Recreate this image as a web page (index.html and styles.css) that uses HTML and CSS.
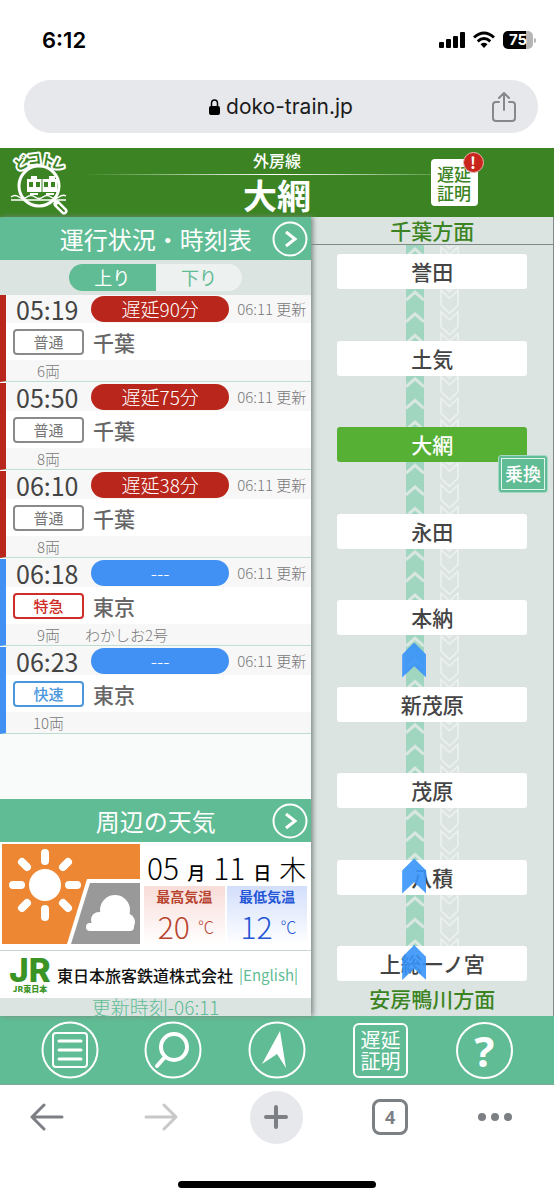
FILE: index.html
```html
<!DOCTYPE html>
<html lang="ja">
<head>
    <meta charset="UTF-8">
    <meta name="viewport" content="width=device-width, initial-scale=1.0">
    <title>どこトレ 大網</title>
    <link rel="stylesheet" href="styles.css">
</head>
<body>
    <div class="status-bar">
        <span class="clock">6:12</span>
        <div class="status-icons">
            <svg width="26" height="18" viewBox="0 0 26 18">
                <rect x="0" y="11" width="5" height="6" rx="1"/>
                <rect x="7" y="8" width="5" height="9" rx="1"/>
                <rect x="14" y="5" width="5" height="12" rx="1"/>
                <rect x="21" y="1" width="5" height="16" rx="1"/>
            </svg>
            <svg width="22" height="18" viewBox="0 0 22 18" fill="none" stroke="#000" stroke-width="3">
                <path d="M1 6.500Q11 -2.500 21 6.500"/>
                <path d="M4.700 10.300Q11 4.700 17.300 10.300"/>
                <path d="M11 17L7.500 13.200Q11 10.500 14.500 13.200Z" fill="#000" stroke="none"/>
            </svg>
            <div class="battery"><span>75</span></div>
            <i class="battery-tip"></i>
        </div>
    </div>

    <div class="url-bar">
        <div class="url">
            <svg width="11" height="16" viewBox="0 0 11 16">
                <rect x="0" y="7" width="11" height="9" rx="2"/>
                <path d="M2.500 8V4.500a3 3.500 0 0 1 6 0V8" fill="none" stroke="#000" stroke-width="1.500"/>
            </svg>
            <span>doko-train.jp</span>
        </div>
        <button class="share" aria-label="Share">
            <svg width="24" height="30" viewBox="0 0 24 30" fill="none" stroke="#85888d" stroke-width="2" stroke-linecap="round" stroke-linejoin="round">
                <path d="M7 10H4q-3 0-3 3v13q0 3 3 3h16q3 0 3-3V13q0-3-3-3h-3M12 18V1M7 6l5-5 5 5"/>
            </svg>
        </button>
    </div>

    <header class="header">
        <a class="logo" href="#" aria-label="どこトレ">
            <svg width="60" height="66" viewBox="0 0 60 66">
                <path d="M1 48q4-3 8 0t8 0 8 0 8 0 8 0 8 0 7-1M1 51h55" fill="none" stroke="#fff" stroke-width="1.500"/>
                <circle cx="29" cy="37" r="20" fill="none" stroke="#fff" stroke-width="3"/>
                <path d="M43 51l4 3" stroke="#fff" stroke-width="3"/>
                <path d="M47 55l7 7" stroke="#fff" stroke-width="7" stroke-linecap="round"/>
                <path d="M48 56l6 6" stroke="#3c8423" stroke-width="2" stroke-linecap="round"/>
                <path d="M17 30h30v13H17zM21 27h6v3h-6zM39 27h6v3h-6z" fill="#fff"/>
                <path d="M19 33h4v5h-4zM26 33h4v5h-4zM34 33h4v5h-4zM41 33h4v5h-4z" fill="#3c8423"/>
                <path d="M32 30v13" stroke="#3c8423"/>
                <path d="M20 45h8M36 45h8" stroke="#fff" stroke-width="2"/>
                <g class="logo-text">
                    <text transform="translate(7 22) rotate(-26)">ど</text>
                    <text transform="translate(18 16) rotate(-8)">コ</text>
                    <text transform="translate(30 15) rotate(10)">ト</text>
                    <text transform="translate(40 17) rotate(26)">レ</text>
                </g>
            </svg>
        </a>
        <div class="header-title">
            <p class="line-name">外房線</p>
            <h1>大網</h1>
        </div>
        <button class="certificate">遅延<br>証明<span class="alert">!</span></button>
    </header>

    <main class="main">
        <div class="left">
            <section>
                <div class="heading">
                    <h2>運行状況・時刻表</h2>
                    <button class="more" aria-label="運行状況・時刻表">
                        <svg width="36" height="36" viewBox="0 0 36 36" fill="none" stroke="#fff" stroke-width="2">
                            <circle cx="18" cy="18" r="16.500"/>
                            <path d="M14 11l9 7-9 7" stroke-width="3"/>
                        </svg>
                    </button>
                </div>
                <div class="direction-switch">
                    <button class="active">上り</button><button>下り</button>
                </div>
            </section>

            <ul class="trains">
                <li class="train delayed">
                    <div class="train-top"><time>05:19</time><span class="state">遅延90分</span><span class="updated">06:11 更新</span></div>
                    <div class="train-mid"><span class="type">普通</span><span class="dest">千葉</span></div>
                    <div class="train-bottom"><span class="cars">6両</span></div>
                </li>
                <li class="train delayed">
                    <div class="train-top"><time>05:50</time><span class="state">遅延75分</span><span class="updated">06:11 更新</span></div>
                    <div class="train-mid"><span class="type">普通</span><span class="dest">千葉</span></div>
                    <div class="train-bottom"><span class="cars">8両</span></div>
                </li>
                <li class="train delayed">
                    <div class="train-top"><time>06:10</time><span class="state">遅延38分</span><span class="updated">06:11 更新</span></div>
                    <div class="train-mid"><span class="type">普通</span><span class="dest">千葉</span></div>
                    <div class="train-bottom"><span class="cars">8両</span></div>
                </li>
                <li class="train">
                    <div class="train-top"><time>06:18</time><span class="state">---</span><span class="updated">06:11 更新</span></div>
                    <div class="train-mid"><span class="type express">特急</span><span class="dest">東京</span></div>
                    <div class="train-bottom"><span class="cars">9両</span><span>わかしお2号</span></div>
                </li>
                <li class="train">
                    <div class="train-top"><time>06:23</time><span class="state">---</span><span class="updated">06:11 更新</span></div>
                    <div class="train-mid"><span class="type rapid">快速</span><span class="dest">東京</span></div>
                    <div class="train-bottom"><span class="cars">10両</span></div>
                </li>
            </ul>

            <section>
                <div class="heading">
                    <h2>周辺の天気</h2>
                    <button class="more" aria-label="周辺の天気">
                        <svg width="36" height="36" viewBox="0 0 36 36" fill="none" stroke="#fff" stroke-width="2">
                            <circle cx="18" cy="18" r="16.500"/>
                            <path d="M14 11l9 7-9 7" stroke-width="3"/>
                        </svg>
                    </button>
                </div>
                <div class="weather">
                    <svg width="138" height="100" viewBox="0 0 138 100">
                        <rect width="138" height="100" fill="#ed8733"/>
                        <path d="M65 100L85 35h53v65z" fill="#fff"/>
                        <path d="M69 100L88 39h50v61z" fill="#999"/>
                        <circle cx="43" cy="41" r="16" fill="#fff"/>
                        <g stroke="#fff" stroke-width="8" stroke-linecap="round">
                            <path d="M43 9v8M43 65v8M11 41h8M67 41h8M20 18l5 5M61 59l5 5M20 64l5-5M61 23l5-5"/>
                        </g>
                        <g fill="#fff">
                            <circle cx="113" cy="66" r="15"/>
                            <circle cx="97" cy="76" r="8"/>
                            <circle cx="124" cy="78" r="9"/>
                            <rect x="84" y="79" width="48" height="8" rx="4"/>
                            <rect x="96" y="72" width="28" height="14"/>
                        </g>
                    </svg>
                    <div class="forecast">
                        <p class="date">05<small>月</small>11<small>日</small><b>木</b></p>
                        <div class="temps">
                            <div class="temp high"><h3>最高気温</h3><p>20<small>℃</small></p></div>
                            <div class="temp low"><h3>最低気温</h3><p>12<small>℃</small></p></div>
                        </div>
                    </div>
                </div>
                <div class="company">
                    <div class="jr"><strong>JR</strong><span>JR東日本</span></div>
                    <span class="company-name">東日本旅客鉄道株式会社</span>
                    <a href="#">|English|</a>
                </div>
                <p class="update-time">更新時刻-06:11</p>
            </section>
        </div>

        <div class="right">
            <p class="bound bound-up">千葉方面</p>
            <div class="route">
                <svg class="tracks" width="54" height="100%">
                    <defs>
                        <pattern id="track" width="54" height="21.630" patternUnits="userSpaceOnUse">
                            <rect y="-1" x="1" width="18" height="24" fill="#a0d5bf"/>
                            <path d="M1 12l9-8 9 8" fill="none" stroke="#dae7e2" stroke-width="3"/>
                            <path d="M36 2l8.500 8 8.500-8v15l-8.500 8-8.500-8zM36 -4.630l8.500 8 8.500-8" fill="none" stroke="#eff4f3" stroke-width="1.300"/>
                        </pattern>
                    </defs>
                    <rect width="54" height="100%" fill="url(#track)"/>
                </svg>
                <ul class="stations">
                    <li>誉田</li>
                    <li>土気</li>
                    <li class="current">大網<a class="transfer" href="#">乗換</a></li>
                    <li>永田</li>
                    <li>本納</li>
                    <li>新茂原<i class="marker between"></i></li>
                    <li>茂原</li>
                    <li>八積<i class="marker"></i></li>
                    <li>上総一ノ宮<i class="marker"></i></li>
                </ul>
            </div>
            <p class="bound">安房鴨川方面</p>
        </div>
    </main>

    <nav class="nav">
        <button aria-label="メニュー">
            <svg width="58" height="58" viewBox="0 0 58 58" fill="none" stroke="#fff" stroke-width="2">
                <circle cx="29" cy="29" r="27.500"/>
                <rect x="12" y="12" width="34" height="34" rx="3"/>
                <path d="M18 20h22M18 29h22M18 38h22" stroke-width="3" stroke-linecap="round"/>
            </svg>
        </button>
        <button aria-label="検索">
            <svg width="58" height="58" viewBox="0 0 58 58" fill="none" stroke="#fff" stroke-width="2">
                <circle cx="29" cy="29" r="27.500"/>
                <circle cx="30" cy="26" r="13" stroke-width="4"/>
                <path d="M20 37l-7 8" stroke-width="4" stroke-linecap="round"/>
            </svg>
        </button>
        <button aria-label="現在地">
            <svg width="58" height="58" viewBox="0 0 58 58" fill="none" stroke="#fff" stroke-width="2">
                <circle cx="29" cy="29" r="27.500"/>
                <path d="M32 10l6 37-9-14-15 10z" fill="#fff" stroke="none"/>
            </svg>
        </button>
        <button class="nav-certificate">遅延<br>証明</button>
        <button class="help">?</button>
    </nav>

    <div class="toolbar">
        <button class="back" aria-label="Back">
            <svg width="34" height="28" viewBox="0 0 34 28" fill="none" stroke="#7c8084" stroke-width="3" stroke-linecap="round" stroke-linejoin="round">
                <path d="M32 14H2M14 2L2 14l12 12"/>
            </svg>
        </button>
        <button class="forward" aria-label="Forward">
            <svg width="34" height="28" viewBox="0 0 34 28" fill="none" stroke="#c8c8c8" stroke-width="3" stroke-linecap="round" stroke-linejoin="round">
                <path d="M2 14h30M20 2l12 12-12 12"/>
            </svg>
        </button>
        <button class="new-tab" aria-label="New tab">
            <svg width="24" height="24" viewBox="0 0 24 24" stroke="#7c8084" stroke-width="4" stroke-linecap="round">
                <path d="M12 2v20M2 12h20"/>
            </svg>
        </button>
        <button class="tabs">4</button>
        <button aria-label="More">
            <svg width="34" height="8" viewBox="0 0 34 8" fill="#7c8084">
                <circle cx="4" cy="4" r="4"/>
                <circle cx="17" cy="4" r="4"/>
                <circle cx="30" cy="4" r="4"/>
            </svg>
        </button>
    </div>
    <div class="home-indicator"></div>
</body>
</html>
```
FILE: styles.css
```css
:root {
    --green: #3c8423;
    --teal: #60bc94;
    --panel: #dce4e2;
    --strip: #f7f7f7;
    --red: #b9261b;
    --blue: #4191f5;
    --gray: #7c8084;
}

* {
    box-sizing: border-box;
}

body {
    margin: 0;
    background-color: #fff;
    font-family: "Noto Sans CJK JP", sans-serif;
    color: #444;
}

h1, h2, h3, p, ul {
    margin: 0;
    padding: 0;
    font-weight: inherit;
}

ul {
    list-style: none;
}

button {
    padding: 0;
    border: none;
    background: none;
    font-family: inherit;
    color: inherit;
    cursor: pointer;
}

a {
    color: inherit;
    text-decoration: none;
}

svg {
    display: block;
}

/* browser chrome */
.status-bar {
    display: flex;
    align-items: center;
    justify-content: space-between;
    height: 80px;
    padding: 0 18px 0 42px;
    font-family: Inter, sans-serif;
    color: #000;
}

.clock {
    font-size: 22px;
    font-weight: 600;
}

.status-icons {
    display: flex;
    align-items: center;
    gap: 8px;
}

.battery {
    width: 30px;
    height: 18px;
    border-radius: 5px;
    background: linear-gradient(to right, #000 76%, #b5b5b5 76%);
    color: #fff;
    font-size: 15px;
    font-weight: 700;
    line-height: 18px;
    text-align: center;
}

.battery-tip {
    width: 2px;
    height: 5px;
    margin-left: -7px;
    border-radius: 0 2px 2px 0;
    background-color: #b5b5b5;
}

.url-bar {
    display: grid;
    grid-template-columns: 1fr auto 1fr;
    align-items: center;
    height: 53px;
    margin: 0 16px 15px 24px;
    padding: 0 22px;
    border-radius: 27px;
    background-color: #e7e8ec;
    font-family: Inter, sans-serif;
    font-size: 21px;
    color: #1b1b1b;
}

.url {
    grid-column: 2;
    display: flex;
    align-items: center;
    gap: 6px;
}

.share {
    justify-self: end;
}

/* page header */
.header {
    display: grid;
    grid-template-columns: 1fr 2fr 1fr;
    height: 69px;
    background-color: var(--green);
    color: #fff;
}

.logo {
    padding: 1px 0 0 10px;
}

.logo-text {
    fill: var(--green);
    stroke: #fff;
    stroke-width: 4px;
    stroke-linejoin: round;
    paint-order: stroke;
    font-size: 14px;
    font-weight: 700;
}

.header-title {
    display: flex;
    flex-direction: column;
    align-items: center;
}

.line-name {
    width: 140%;
    height: 27px;
    border-bottom: 1px solid;
    border-image: linear-gradient(to right, transparent, #fff 50%, transparent) 1;
    font-size: 16px;
    font-weight: 500;
    line-height: 25px;
    text-align: center;
}

.header h1 {
    font-size: 34px;
    font-weight: 700;
    line-height: 40px;
}

.certificate {
    position: relative;
    justify-self: start;
    width: 47px;
    height: 47px;
    margin: 11px 0 0 15px;
    border-radius: 4px;
    background-color: #fff;
    font-size: 17px;
    font-weight: 500;
    line-height: 19px;
    color: var(--green);
}

.alert {
    position: absolute;
    top: -7px;
    right: -6px;
    width: 21px;
    height: 21px;
    border: 1px solid #e9b8b0;
    border-radius: 50%;
    background-color: #c9251c;
    font-size: 16px;
    font-weight: 700;
    line-height: 18px;
    color: #fff;
}

/* columns */
.main {
    display: flex;
    background-color: var(--panel);
}

.left {
    display: flex;
    flex-direction: column;
    width: 56.2%;
    box-shadow: 2px 0 5px #7b8784;
}

.right {
    display: flex;
    flex: 1;
    flex-direction: column;
    border-right: 1px solid #808a87;
}

.heading {
    display: grid;
    grid-template-columns: 1fr auto 1fr;
    align-items: center;
    height: 43px;
    padding: 0 3px;
    background-color: var(--teal);
    color: #fff;
}

.heading h2 {
    grid-column: 2;
    font-size: 24px;
}

.more {
    justify-self: end;
}

.direction-switch {
    display: flex;
    height: 35px;
    padding: 4px 69px;
    background-color: var(--panel);
}

.direction-switch button {
    flex: 1;
    border-radius: 0 14px 14px 0;
    background-color: #edf1f0;
    font-size: 18px;
    line-height: 27px;
    color: var(--teal);
}

.direction-switch .active {
    border-radius: 14px 0 0 14px;
    background-color: var(--teal);
    color: #fff;
}

/* train list */
.trains {
    flex: 1;
    min-height: 504px;
    background-color: #f9fafa;
}

.train {
    height: 87px;
    margin-bottom: 1px;
    border-bottom: 1px solid #bfdcd1;
    border-left: 6px solid var(--blue);
    background-color: var(--strip);
    font-size: 15px;
}

.train.delayed {
    border-left-color: var(--red);
}

.train-top {
    display: flex;
    align-items: center;
    height: 28px;
}

.train time {
    width: 85px;
    padding-left: 10px;
    font-size: 25px;
    line-height: 26px;
}

.state {
    flex: 1;
    height: 26px;
    border-radius: 13px;
    background-color: var(--blue);
    font-size: 19px;
    font-weight: 300;
    line-height: 26px;
    text-align: center;
    color: #fff;
}

.delayed .state {
    background-color: var(--red);
}

.updated {
    width: 82px;
    padding-right: 5px;
    font-weight: 300;
    line-height: 24px;
    text-align: right;
    color: #777;
}

.train-mid {
    display: flex;
    align-items: center;
    gap: 9px;
    height: 37px;
    padding-left: 7px;
    background-color: #fff;
}

.type {
    width: 71px;
    height: 26px;
    border: 2px solid #8a8a8a;
    border-radius: 4px;
    line-height: 22px;
    text-align: center;
    color: #777;
}

.type.express {
    border-color: #cf2d27;
    font-weight: 500;
    color: #cf2d27;
}

.type.rapid {
    border-color: #4a97dc;
    font-weight: 500;
    color: #4a97dc;
}

.dest {
    font-size: 21px;
    font-weight: 500;
    color: #666;
}

.train-bottom {
    display: flex;
    gap: 1px;
    font-weight: 300;
    line-height: 21px;
    color: #777;
}

.cars {
    width: 77px;
    padding-right: 6px;
    margin-left: 1px;
    padding-left: 12px;
    text-align: center;
}

/* weather */
.weather {
    display: flex;
    gap: 4px;
    height: 109px;
    padding: 2px;
    border-bottom: 1px solid #cdd6d4;
    background-color: #fff;
}

.weather svg {
    flex: none;
}

.forecast {
    flex: 1;
}

.date {
    display: flex;
    align-items: baseline;
    justify-content: space-between;
    height: 42px;
    padding: 0 3px;
    font-size: 30px;
    font-weight: 300;
    line-height: 46px;
    color: #000;
}

.date small {
    font-size: 18px;
    font-weight: 500;
}

.date b {
    font-size: 27px;
    font-weight: 300;
}

.temps {
    display: grid;
    grid-template-columns: 1fr 1fr;
    gap: 2px;
    margin-right: 2px;
    text-align: center;
}

.temp {
    height: 58px;
    background: linear-gradient(#f8dcd8, #fff);
    color: #b6442f;
}

.temp.low {
    background: linear-gradient(#d2defb, #fff);
    color: #2456d6;
}

.temp h3 {
    font-size: 14px;
    font-weight: 700;
    line-height: 20px;
}

.temp p {
    display: flex;
    align-items: center;
    justify-content: center;
    gap: 8px;
    padding-left: 3px;
    font-size: 30px;
    font-weight: 300;
    line-height: 40px;
}

.temp small {
    font-size: 16px;
}

.company {
    display: flex;
    align-items: center;
    height: 47px;
    padding-left: 9px;
    background-color: #fff;
    font-size: 16px;
}

.jr {
    display: flex;
    flex-direction: column;
    align-items: center;
    width: 42px;
    margin-right: 6px;
    font-size: 8px;
    font-weight: 900;
    line-height: 9px;
    color: #3a9425;
}

.jr strong {
    font-family: Inter, sans-serif;
    font-size: 33px;
    font-weight: 800;
    line-height: 28px;
}

.company-name {
    font-weight: 500;
    color: #111;
}

.company a {
    margin-left: 6px;
    font-size: 15px;
    color: var(--teal);
}

.update-time {
    height: 18px;
    background-color: var(--panel);
    font-size: 19px;
    font-weight: 300;
    line-height: 18px;
    text-align: center;
    color: var(--teal);
}

/* route map */
.bound {
    height: 35px;
    font-size: 21px;
    font-weight: 500;
    line-height: 34px;
    text-align: center;
    color: var(--green);
}

.bound-up {
    height: 28px;
    border-bottom: 1px solid #7f8a87;
    line-height: 26px;
}

.route {
    position: relative;
    display: flex;
    flex: 1;
    padding: 9px 26px 0;
}

.tracks {
    position: absolute;
    top: 0;
    left: calc(50% - 27px);
}

.stations {
    position: relative;
    display: flex;
    flex: 1;
    flex-direction: column;
    justify-content: space-between;
}

.stations li {
    position: relative;
    height: 35px;
    border-radius: 3px;
    background-color: #fff;
    font-size: 21px;
    font-weight: 500;
    line-height: 34px;
    text-align: center;
}

.stations .current {
    background-color: #56b033;
    color: #fff;
}

.transfer {
    position: absolute;
    top: 29px;
    right: -20px;
    width: 48px;
    height: 36px;
    border: 2px solid var(--teal);
    border-radius: 2px;
    outline: 1px solid #a5d9c3;
    background-color: var(--teal);
    box-shadow: inset 0 0 0 1px #e3f4ec;
    font-size: 18px;
    line-height: 31px;
    color: #fff;
}

.marker {
    position: absolute;
    top: -1px;
    left: calc(50% - 30px);
    width: 24px;
    height: 35px;
    background-color: rgba(55, 148, 250, 0.9);
    clip-path: polygon(50% 0, 100% 34%, 100% 100%, 50% 68%, 0 100%, 0 34%);
}

.marker.between {
    top: -44px;
}

/* bottom navigation */
.nav {
    display: grid;
    grid-template-columns: repeat(5, 1fr);
    align-items: center;
    justify-items: center;
    height: 69px;
    padding: 0 18px;
    border-bottom: 1px solid #7fa894;
    background-color: var(--teal);
    color: #fff;
}

.nav-certificate {
    width: 55px;
    height: 55px;
    border: 2px solid #fff;
    border-radius: 6px;
    font-size: 20px;
    line-height: 21px;
}

.help {
    width: 57px;
    height: 57px;
    border: 2px solid #fff;
    border-radius: 50%;
    font-family: "Noto Sans", sans-serif;
    font-size: 42px;
    font-weight: 700;
    line-height: 53px;
}

.toolbar {
    display: flex;
    align-items: center;
    justify-content: space-between;
    height: 64px;
    padding: 0 42px 0 30px;
}

.back {
    width: 44px;
}

.forward {
    width: 36px;
}

.new-tab {
    display: grid;
    place-items: center;
    width: 53px;
    height: 53px;
    border-radius: 50%;
    background-color: #e7e8ec;
}

.tabs {
    width: 36px;
    height: 36px;
    border: 3px solid var(--gray);
    border-radius: 8px;
    font-family: "Noto Sans", sans-serif;
    font-size: 18px;
    font-weight: 700;
    color: var(--gray);
}

.home-indicator {
    width: 198px;
    height: 7px;
    margin: 32px auto 0;
    border-radius: 4px;
    background-color: #000;
}
```
